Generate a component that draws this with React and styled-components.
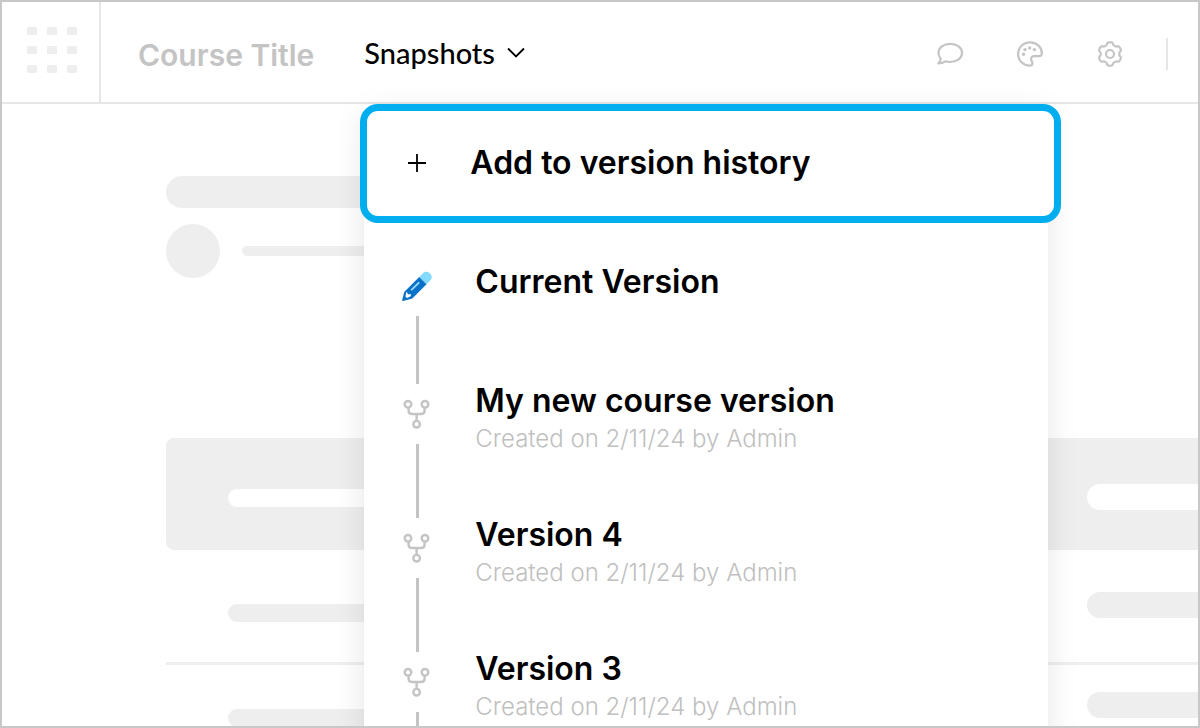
import React, { useState } from "react";
import styled, { createGlobalStyle } from "styled-components";

const versions = [
  { id: 1, title: "Current Version", current: true },
  {
    id: 2,
    title: "My new course version",
    details: "Created on 2/11/24 by Admin",
  },
  { id: 3, title: "Version 4", details: "Created on 2/11/24 by Admin" },
  { id: 4, title: "Version 3", details: "Created on 2/11/24 by Admin" },
];

const tableRows = [
  { id: "head", head: true, left: 51, right: 46 },
  { id: "first", left: 54, right: 42 },
  { id: "second", left: 44, right: 27, divided: true },
];

// outline of a cog with six soft teeth, the first one pointing up
const gearPoints = Array.from({ length: 120 }, (_, i) => {
  const angle = (i * Math.PI) / 60;
  const radius = 10.5 + 1.2 * Math.tanh(2.5 * Math.cos(6 * angle) + 0.4);
  const x = 14 + radius * Math.sin(angle);
  const y = 14 - radius * Math.cos(angle);
  return `${x.toFixed(2)},${y.toFixed(2)}`;
}).join(" ");

const CommentIcon = () => (
  <svg width="28" height="28" viewBox="0 0 28 28" fill="none">
    <path
      d="M4.8 18.6C3.4 17 2.5 15 2.5 12.9C2.5 7.6 7.6 3.9 14.2 3.9S26 7.6 26 12.9S20.8 22 14.2 22C12.5 22 10.9 21.8 9.4 21.3C7.5 22.6 5.2 23.4 2.2 23.4C3.7 22.2 4.6 20.5 4.8 18.6Z"
      stroke="#c4c4c4"
      strokeWidth="2.2"
      strokeLinejoin="round"
    />
  </svg>
);

const PaletteIcon = () => (
  <svg width="28" height="28" viewBox="0 0 28 28" fill="none">
    <path
      d="M14 2.3C20.6 2.3 25.9 7.2 25.9 13.2C25.9 15.2 24.7 16.2 22.9 16.2H18.2C15.9 16.2 14.6 17.6 15.1 19.6C15.4 20.8 16.4 21.5 16.4 23.2C16.4 25 15.5 25.7 13.8 25.7C7.3 25.7 2.1 20.6 2.1 14S7.4 2.3 14 2.3Z"
      stroke="#c4c4c4"
      strokeWidth="2.2"
    />
    <circle cx="7.5" cy="14.2" r="1.7" fill="#c4c4c4" />
    <circle cx="9" cy="9.6" r="1.7" fill="#c4c4c4" />
    <circle cx="13.7" cy="7.9" r="1.7" fill="#c4c4c4" />
    <circle cx="18.4" cy="9.6" r="1.7" fill="#c4c4c4" />
  </svg>
);

const SettingsIcon = () => (
  <svg width="28" height="28" viewBox="0 0 28 28" fill="none">
    <g stroke="#c4c4c4" strokeWidth="2.1" strokeLinejoin="round">
      <polygon points={gearPoints} />
      <circle cx="14" cy="14" r="4" />
    </g>
  </svg>
);

const ChevronIcon = () => (
  <svg width="18" height="12" viewBox="0 0 18 12" fill="none">
    <path d="M1 1.5L9 9.5L17 1.5" stroke="#000" strokeWidth="1.8" />
  </svg>
);

const PlusIcon = () => (
  <svg width="30" height="30" viewBox="0 0 30 30" fill="none">
    <path d="M15 6V24M6 15H24" stroke="#000" strokeWidth="1.8" />
  </svg>
);

const PencilIcon = () => (
  <svg width="30" height="30" viewBox="0 0 30 30" fill="none">
    <path
      d="M17.2 6L21.4 1.8C23 .4 25.8 .4 27.6 2.2L28.4 3C30.2 4.8 30.2 7.5 28.6 9.1L24.5 13.3Z"
      fill="#83dafc"
    />
    <path
      d="M17.2 6L24.5 13.3L10.8 27C10.2 27.6 9.4 27.8 8.6 28.1L1.2 29.9C.4 30.1 0 29.6 .2 28.8L2 21.9C2.2 21.1 2.6 20.6 3.2 20Z"
      fill="#0b72c9"
    />
    <path
      d="M4.5 20.8L6.2 23.3L9.2 23.2L8.6 25.2L5 27L3.4 25.4Z"
      fill="#fff"
    />
    <path d="M9.2 19.2L17.2 11.4" stroke="#9adcfb" strokeWidth="1.8" />
  </svg>
);

const ForkIcon = () => (
  <svg width="30" height="30" viewBox="0 0 30 30" fill="none">
    <g stroke="#c4c4c4" strokeWidth="2.4">
      <circle cx="6" cy="5.3" r="3.3" />
      <circle cx="23" cy="5.3" r="3.3" />
      <circle cx="14.6" cy="25.2" r="3.3" />
      <path d="M6.6 8.6V11.4C6.6 13.6 8 15 10.2 15H19C21.2 15 22.6 13.6 22.6 11.4V8.6M14.6 15V22" />
    </g>
  </svg>
);

const VersionItem = ({ version }) => (
  <li>
    <VersionButton type="button" $current={version.current}>
      <Rail>
        {version.current ? <PencilIcon /> : <ForkIcon />}
        <RailLine />
      </Rail>
      <VersionText $current={version.current}>
        <ItemTitle>{version.title}</ItemTitle>
        {version.details && <Details>{version.details}</Details>}
      </VersionText>
    </VersionButton>
  </li>
);

const App = () => {
  const [open, setOpen] = useState(true);

  return (
    <Frame>
      <GlobalStyle />
      <Header>
        <AppsButton type="button" aria-label="Apps">
          {Array.from({ length: 9 }, (_, i) => (
            <Dot key={i} />
          ))}
        </AppsButton>
        <HeaderContent>
          <CourseTitle>Course Title</CourseTitle>
          <Dropdown>
            <DropdownButton
              type="button"
              aria-expanded={open}
              onClick={() => setOpen(!open)}
            >
              Snapshots
              <ChevronIcon />
            </DropdownButton>
            {open && (
              <Menu>
                <AddButton type="button">
                  <PlusIcon />
                  <ItemTitle>Add to version history</ItemTitle>
                </AddButton>
                <VersionList>
                  {versions.map((version) => (
                    <VersionItem key={version.id} version={version} />
                  ))}
                </VersionList>
              </Menu>
            )}
          </Dropdown>
          <Tools>
            <ToolButton type="button" aria-label="Comments">
              <CommentIcon />
            </ToolButton>
            <ToolButton type="button" aria-label="Theme">
              <PaletteIcon />
            </ToolButton>
            <ToolButton type="button" aria-label="Settings">
              <SettingsIcon />
            </ToolButton>
            <Separator />
          </Tools>
        </HeaderContent>
      </Header>
      <Page>
        <TitleBar />
        <AuthorRow>
          <Avatar />
          <AuthorBar />
        </AuthorRow>
        <div>
          {tableRows.map((row) => (
            <SkeletonRow key={row.id} $head={row.head} $divided={row.divided}>
              <LeftBar $head={row.head} $top={row.left} />
              <RightBar $head={row.head} $top={row.right} />
            </SkeletonRow>
          ))}
        </div>
      </Page>
    </Frame>
  );
};

export default App;

const GlobalStyle = createGlobalStyle`
  * {
    box-sizing: border-box;
  }
  body {
    margin: 0;
    background: #fff;
    font-family: Inter, "Liberation Sans", sans-serif;
  }
  button {
    margin: 0;
    padding: 0;
    border: none;
    background: none;
    color: inherit;
    font: inherit;
    text-align: left;
    cursor: pointer;
  }
  svg {
    display: block;
    flex-shrink: 0;
  }
`;

const Frame = styled.div`
  display: flex;
  flex-direction: column;
  height: 100vh;
  overflow: hidden;
  border: 2px solid #c8c8c8;
`;

const Header = styled.header`
  display: flex;
  flex-shrink: 0;
  height: 102px;
  border-bottom: 2px solid #e6e6e6;
`;

const AppsButton = styled.button`
  display: grid;
  grid-template-columns: repeat(3, 10px);
  grid-auto-rows: 8px;
  place-content: center;
  gap: 11px 10px;
  width: 99px;
  padding: 0 0 4px 2px;
  border-right: 2px solid #e6e6e6;
`;

const Dot = styled.span`
  background: #eee;
  border-radius: 1px;
`;

const HeaderContent = styled.div`
  display: flex;
  flex: 1;
  align-items: center;
  padding: 4px 30px 0 37px;
`;

const CourseTitle = styled.h1`
  margin: 0;
  padding-top: 2px;
  color: #c4c4c4;
  font-size: 30px;
  line-height: 36px;
  font-weight: 600;
  white-space: nowrap;
`;

const Dropdown = styled.div`
  position: relative;
  display: flex;
  align-self: stretch;
  margin-left: 50px;
`;

const DropdownButton = styled.button`
  display: flex;
  align-items: center;
  gap: 12px;
  padding-bottom: 2px;
  color: #000;
  font-family: Lato, "Liberation Sans", sans-serif;
  font-size: 29px;
  line-height: 36px;
  font-weight: 500;
`;

const Menu = styled.div`
  position: absolute;
  top: 100%;
  left: 0;
  z-index: 1;
  width: 684px;
  margin-top: 2px;
  background: #fff;
  box-shadow: 0 10px 30px rgba(0, 0, 0, 0.1);
`;

const AddButton = styled.button`
  display: flex;
  align-items: center;
  gap: 38px;
  width: calc(100% + 17px);
  height: 119px;
  margin-left: -4px;
  padding: 0 0 2px 35px;
  border: 7px solid #00aeef;
  border-radius: 18px;
  background: #fff;
`;

const VersionList = styled.ul`
  margin: 0;
  padding: 33px 0 0 38px;
  list-style: none;
`;

const VersionButton = styled.button`
  display: flex;
  gap: 43px;
  width: 100%;
  min-height: ${({ $current }) => ($current ? "128px" : "134px")};
`;

const Rail = styled.span`
  display: flex;
  flex-direction: column;
  align-self: stretch;
  align-items: center;
  gap: 15px;
  width: 30px;
  padding-top: 15px;
`;

const RailLine = styled.span`
  flex: 1;
  width: 3px;
  background: #c4c4c4;
`;

const VersionText = styled.span`
  display: flex;
  flex-direction: column;
  padding-top: ${({ $current }) => ($current ? "9px" : "0")};
`;

const ItemTitle = styled.span`
  color: #000;
  font-size: 32px;
  line-height: 34px;
  font-weight: 600;
`;

const Details = styled.span`
  color: #c0c0c0;
  font-size: 24px;
  line-height: 42px;
  font-weight: 300;
`;

const Tools = styled.div`
  display: flex;
  align-items: center;
  gap: 52px;
  margin-left: auto;
`;

const ToolButton = styled.button`
  width: 28px;
  height: 28px;
`;

const Separator = styled.span`
  width: 2px;
  height: 32px;
  margin-left: -10px;
  background: #e6e6e6;
`;

const Page = styled.main`
  flex: 1;
  padding: 72px 0 0 164px;
`;

const TitleBar = styled.div`
  width: 50%;
  height: 32px;
  border-radius: 16px;
  background: #eee;
`;

const AuthorRow = styled.div`
  display: flex;
  align-items: center;
  gap: 22px;
  margin: 16px 0 160px;
`;

const Avatar = styled.div`
  width: 54px;
  height: 54px;
  border-radius: 50%;
  background: #eee;
`;

const AuthorBar = styled.div`
  width: 30%;
  height: 10px;
  border-radius: 5px;
  background: #eee;
`;

const SkeletonRow = styled.div`
  display: flex;
  justify-content: space-between;
  align-items: flex-start;
  height: 112px;
  padding-left: 62px;
  border-top: ${({ $divided }) => ($divided ? "3px solid #eee" : "none")};
  border-radius: ${({ $head }) => ($head ? "8px 0 0 8px" : "0")};
  background: ${({ $head }) => ($head ? "#eee" : "transparent")};
`;

const LeftBar = styled.div`
  width: 40%;
  height: 18px;
  margin-top: ${({ $top }) => $top}px;
  border-radius: 9px;
  background: ${({ $head }) => ($head ? "#fff" : "#eee")};
`;

const RightBar = styled.div`
  width: 111px;
  height: 26px;
  margin-top: ${({ $top }) => $top}px;
  border-radius: 13px 0 0 13px;
  background: ${({ $head }) => ($head ? "#fff" : "#eee")};
`;
